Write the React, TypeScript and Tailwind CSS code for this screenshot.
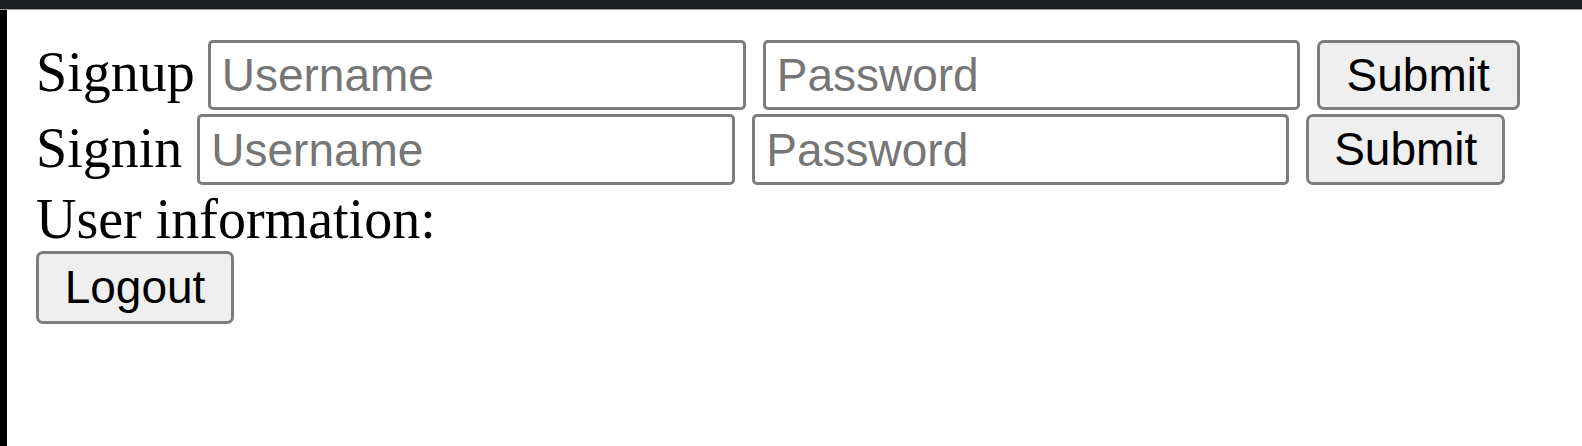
import { clsx } from 'clsx'

type AuthRowProps = {
  label: string
  className?: string
  labelClassName?: string
  buttonClassName?: string
}

function AuthRow({ label, className, labelClassName, buttonClassName }: AuthRowProps) {
  return (
    <div className={clsx('flex items-start', className)}>
      <span className={clsx('leading-none', labelClassName)}>{label}</span>
      <input
        type="text"
        placeholder="Username"
        className="mr-[17px] h-full w-[538px] rounded-[5px] border-[3px] border-[#7d7d7d] bg-white pl-[11px] font-['Liberation_Sans',Arial,sans-serif] text-[46px] outline-none placeholder:text-[#767676]"
      />
      <input
        type="password"
        placeholder="Password"
        className="mr-[17px] h-full w-[537px] rounded-[5px] border-[3px] border-[#7d7d7d] bg-white pl-[11px] font-['Liberation_Sans',Arial,sans-serif] text-[46px] outline-none placeholder:text-[#767676]"
      />
      <button
        className={clsx(
          'flex h-full items-center justify-center rounded-[7px] border-[3px] border-[#7d7d7d] bg-[#efefef] font-["Liberation_Sans",Arial,sans-serif] text-[46px] text-black',
          buttonClassName,
        )}
      >
        Submit
      </button>
    </div>
  )
}

export default function App() {
  return (
    <div className="flex h-[446px] w-full flex-col overflow-hidden bg-white">
      <div className="h-[10px] border-b border-[#9c9c9c] bg-[#1e1f22]" />
      <div className="flex flex-1">
        <div className="w-[7px] bg-black" />
        <main className="flex-1 pl-[29px] pt-[30px] font-['Liberation_Serif','Times_New_Roman',serif] text-[56px] text-black">
          <AuthRow label="Signup" className="h-[70px]" labelClassName="mt-[4px] mr-[13px]" buttonClassName="w-[203px]" />
          <AuthRow label="Signin" className="mt-[4px] h-[71px]" labelClassName="mt-[6px] mr-[15px]" buttonClassName="w-[199px]" />
          <p className="mt-[6px] leading-none">User information:</p>
          <button className="mt-[4px] flex h-[73px] w-[198px] items-center justify-center rounded-[7px] border-[3px] border-[#7d7d7d] bg-[#efefef] font-['Liberation_Sans',Arial,sans-serif] text-[46px] text-black">
            Logout
          </button>
        </main>
      </div>
    </div>
  )
}
